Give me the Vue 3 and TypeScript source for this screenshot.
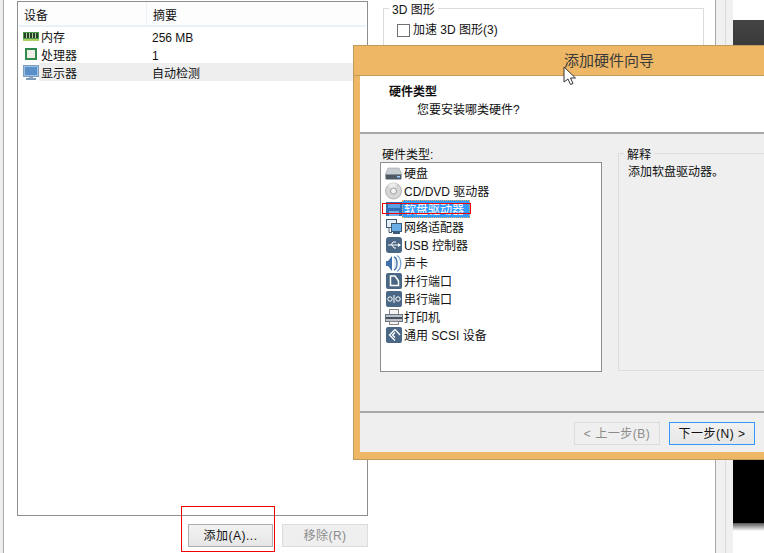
<script setup lang="ts">
interface Item { label: string; icon: string; selected?: boolean }
const devices = [
  { name: '内存', icon: 'ram', summary: '256 MB' },
  { name: '处理器', icon: 'cpu', summary: '1' },
  { name: '显示器', icon: 'monitor', summary: '自动检测', selected: true },
]
const items: Item[] = [
  { label: '硬盘', icon: 'hdd' },
  { label: 'CD/DVD 驱动器', icon: 'cd' },
  { label: '软盘驱动器', icon: 'floppy', selected: true },
  { label: '网络适配器', icon: 'net' },
  { label: 'USB 控制器', icon: 'usb' },
  { label: '声卡', icon: 'sound' },
  { label: '并行端口', icon: 'par' },
  { label: '串行端口', icon: 'ser' },
  { label: '打印机', icon: 'print' },
  { label: '通用 SCSI 设备', icon: 'scsi' },
]
</script>

<template>
  <div class="screen">
    <div class="edge"></div>

    <section class="left">
      <div class="table">
        <div class="thead">
          <span class="col-a">设备</span>
          <span class="col-b">摘要</span>
        </div>
        <div v-for="d in devices" :key="d.name" class="drow">
          <svg class="dicon" width="16" height="16" viewBox="0 0 16 16">
            <template v-if="d.icon === 'ram'">
              <rect x="0" y="3" width="16" height="9" fill="#4a9a4a" />
              <rect x="1" y="4" width="14" height="5" fill="#27402b" />
              <path d="M3.500 4v5M6.500 4v5M9.500 4v5M12.500 4v5" stroke="#b8d0a0" />
              <rect x="0" y="10" width="16" height="2" fill="#a9cf62" />
            </template>
            <template v-else-if="d.icon === 'cpu'">
              <rect x="2" y="1" width="12" height="12" fill="#2f8a4a" />
              <rect x="4" y="3" width="8" height="8" fill="#efefe9" />
            </template>
            <template v-else>
              <rect x="0.500" y="0.500" width="15" height="11" fill="#9cc0e4" stroke="#7d9cc0" />
              <rect x="2" y="2" width="12" height="8" fill="#5a8fc8" />
              <rect x="6" y="12" width="4" height="1" fill="#8fa9c4" />
              <rect x="3" y="13" width="10" height="2" fill="#7f9dbb" />
            </template>
          </svg>
          <div class="dcells" :class="{ sel: d.selected }">
            <span class="dname">{{ d.name }}</span>
            <span class="dsum">{{ d.summary }}</span>
          </div>
        </div>
      </div>
      <div class="actions">
        <button class="btn">添加(A)...</button>
        <button class="btn off wide">移除(R)</button>
      </div>
    </section>

    <section class="right">
      <div class="group3d">
        <span class="legend">3D 图形</span>
        <label class="check"><i class="box"></i>加速 3D 图形(3)</label>
      </div>
    </section>

    <div class="rails">
      <div class="rail"></div>
      <div class="rail2"></div>
    </div>

    <div class="dark">
      <div class="dark-top"></div>
      <div class="dark-main"></div>
      <div class="dark-fade"></div>
    </div>

    <div class="dialog">
      <div class="title">添加硬件向导</div>
      <div class="body">
        <div class="head">
          <div class="h1">硬件类型</div>
          <div class="h2">您要安装哪类硬件?</div>
        </div>
        <div class="main">
          <div class="col-list">
            <div class="list-label">硬件类型:</div>
            <div class="list">
              <div v-for="it in items" :key="it.label" class="li">
                <svg class="licon" width="18" height="18" viewBox="0 0 18 18">
                  <template v-if="it.icon === 'hdd'">
                    <path d="M3 4h11l3 7H0z" fill="#c9ced3" stroke="#9aa2aa" stroke-width=".6" />
                    <rect x="0.500" y="10.500" width="16" height="5" rx="1" fill="#4f5a66" />
                    <rect x="12" y="12" width="3" height="1.500" fill="#9fd0ff" />
                  </template>
                  <template v-else-if="it.icon === 'cd'">
                    <circle cx="8.500" cy="9" r="8" fill="#d6d6d6" stroke="#b4b4b4" />
                    <path d="M8.500 9L3 3.500A8 8 0 0 1 12 2z" fill="#ececec" />
                    <circle cx="8.500" cy="9" r="3" fill="#f5f5f5" stroke="#9c9c9c" />
                  </template>
                  <template v-else-if="it.icon === 'floppy'">
                    <rect x="1" y="2" width="16" height="14" fill="#2f6fb8" />
                    <rect x="3" y="3" width="12" height="5" fill="#5a9ee4" />
                    <rect x="4" y="11" width="10" height="5" fill="#76b0ec" />
                  </template>
                  <template v-else-if="it.icon === 'net'">
                    <rect x="1.500" y="1.500" width="10" height="8" fill="#e6eef6" stroke="#3d5a76" />
                    <path d="M4 9.500v5h3" stroke="#3d5a76" fill="none" />
                    <rect x="6.500" y="5.500" width="10" height="8" fill="#69ade6" stroke="#3d5a76" />
                    <rect x="8" y="14" width="7" height="2" fill="#3d5a76" />
                  </template>
                  <template v-else-if="it.icon === 'usb'">
                    <rect x="1" y="1" width="16" height="16" rx="3" fill="#4a6785" />
                    <path d="M3 9h11M6 9l2-3h3M7 9l2 3h2" stroke="#fff" fill="none" />
                    <path d="M13 7l3 2-3 2z" fill="#fff" />
                  </template>
                  <template v-else-if="it.icon === 'sound'">
                    <path d="M1 7h2l4-5v15l-4-5H1z" fill="#3f70a8" />
                    <path d="M9 3c4 1 4 12 0 13" stroke="#3f70a8" fill="#dbe7f3" stroke-width="1.300" />
                    <path d="M12 1.500c5 3 5 13 0 16" stroke="#7fa8d4" fill="none" stroke-width="1.400" />
                  </template>
                  <template v-else-if="it.icon === 'par'">
                    <rect x="1" y="1" width="16" height="16" rx="2" fill="#4a6785" />
                    <path d="M5.500 4v9.500h8V9L10 4z" stroke="#fff" fill="none" stroke-width="1.500" />
                  </template>
                  <template v-else-if="it.icon === 'ser'">
                    <rect x="1" y="1" width="16" height="16" rx="2" fill="#4a6785" />
                    <circle cx="5" cy="9" r="2.200" stroke="#fff" fill="none" />
                    <circle cx="13" cy="9" r="2.200" stroke="#fff" fill="none" />
                    <path d="M9 5v8" stroke="#fff" />
                  </template>
                  <template v-else-if="it.icon === 'print'">
                    <rect x="4.500" y="1.500" width="9" height="5" fill="#f4f4f4" stroke="#888" />
                    <rect x="0.500" y="6.500" width="17" height="7" fill="#bcc2c9" stroke="#6b7480" />
                    <rect x="1" y="9" width="16" height="2" fill="#47525e" />
                    <rect x="4.500" y="13.500" width="9" height="3" fill="#f4f4f4" stroke="#888" />
                  </template>
                  <template v-else>
                    <rect x="1" y="1" width="16" height="16" rx="2" fill="#4a6785" />
                    <path d="M10 3.500L4.500 9 10 14.500M10 6.500L7.500 9 10 11.500" stroke="#fff" fill="none" stroke-width="1.300" />
                    <path d="M10 3.500L15 9" stroke="#fff" fill="none" stroke-width="1.300" />
                  </template>
                </svg>
                <span class="ltext" :class="{ sel: it.selected }">{{ it.label }}</span>
              </div>
            </div>
          </div>
          <div class="explain">
            <span class="legend2">解释</span>
            <div class="explain-text">添加软盘驱动器。</div>
          </div>
        </div>
        <div class="foot">
          <button class="btn wide off">&lt; 上一步(B)</button>
          <button class="btn wide primary">下一步(N) &gt;</button>
        </div>
      </div>
    </div>

    <div class="mark mark-add"></div>
    <div class="mark mark-floppy"></div>
    <svg class="cursor" width="14" height="20" viewBox="0 0 14 20">
      <path d="M1 1v15l4-3 2.500 5.500 2.500-1L7.500 12H12.500z" fill="#fff" stroke="#333" />
    </svg>
  </div>
</template>

<style>
html, body { margin: 0; background: #fff; }
</style>

<style scoped>
.screen {
  position: relative;
  width: 764px;
  height: 553px;
  overflow: hidden;
  display: flex;
  background: #fff;
  color: #111;
  font: 12px/18px "Liberation Sans", "Noto Sans CJK SC", sans-serif;
}
.edge {
  width: 3px;
  flex: none;
  background: #eeeeee;
  border-right: 1px solid #a8a8a8;
}
.left {
  flex: none;
  width: 351px;
  margin-left: 13px;
  padding-top: 1px;
  display: flex;
  flex-direction: column;
}
.table {
  height: 515px;
  box-sizing: border-box;
  border: 1px solid #8e8e8e;
  background: #fff;
}
.thead {
  height: 23px;
  margin: 0 1px;
  display: flex;
  background: #fdfdfe;
  border-bottom: 2px solid #e9f2fb;
  line-height: 29px;
}
.col-a {
  width: 128px;
  flex: none;
  padding-left: 5px;
  box-sizing: border-box;
  border-right: 1px solid #e9f2fb;
}
.col-b { padding-left: 6px; }
.drow {
  display: flex;
  height: 18px;
  padding-left: 4px;
}
.dicon { flex: none; margin: 2px 0 0 1px; }
.dcells {
  flex: 1;
  display: flex;
  height: 18px;
  box-sizing: border-box;
  padding-top: 2px;
}
.dcells.sel { background: #eeeeee; }
.dname { width: 113px; flex: none; padding-left: 2px; box-sizing: border-box; }
.actions {
  display: flex;
  justify-content: flex-end;
  gap: 9px;
  margin-top: 8px;
}
.btn {
  width: 85px;
  height: 23px;
  padding: 0;
  box-sizing: border-box;
  border: 1px solid #adadad;
  background: linear-gradient(#f2f2f2, #e6e6e6);
  color: #111;
  font: inherit;
  letter-spacing: 0.5px;
}
.btn.off {
  border-color: #dcdcdc;
  background: #efefef;
  color: #8b8b8b;
}
.btn.primary {
  border-color: #3399ff;
}
.right {
  flex: none;
  width: 347px;
  box-sizing: border-box;
  padding: 8px 0 0 15px;
}
.group3d {
  position: relative;
  width: 321px;
  height: 60px;
  box-sizing: border-box;
  border: 1px solid #dcdcdc;
  padding: 12px 0 0 13px;
}
.legend {
  position: absolute;
  left: 5px;
  top: -8px;
  padding: 0 3px;
  background: #fff;
}
.check { display: flex; align-items: center; gap: 3px; }
.box {
  width: 13px;
  height: 13px;
  box-sizing: border-box;
  border: 1px solid #707070;
  background: #fff;
}
.rails {
  flex: none;
  display: flex;
  width: 18px;
  height: 553px;
}
.rail {
  width: 11px;
  box-sizing: border-box;
  background: #f0f0f0;
  border-left: 1px solid #a8a8a8;
  border-right: 1px solid #dcdcdc;
}
.rail2 { width: 7px; background: #f0f0f0; }
.dark {
  flex: 1;
  display: flex;
  flex-direction: column;
}
.dark-top { height: 20px; background: #fff; }
.dark-main {
  height: 503px;
  background: linear-gradient(#444 0, #2c2c2c 60px, #000 200px);
}
.dark-fade {
  height: 8px;
  background: linear-gradient(#555, #fff);
}
.dialog {
  position: absolute;
  left: 353px;
  top: 45px;
  width: 411px;
  height: 415px;
  box-sizing: border-box;
  background: #edb766;
  border: 1px solid #c49a5c;
  border-right: none;
  padding: 0 0 7px 6px;
  display: flex;
  flex-direction: column;
}
.title {
  height: 29px;
  flex: none;
  line-height: 29px;
  padding-left: 210px;
  font-size: 15px;
  color: #3a3a3a;
  border-bottom: 1px solid #c49a5c;
  margin-left: -6px;
}
.body {
  flex: 1;
  display: flex;
  flex-direction: column;
  background: #efefef;
  min-height: 0;
}
.head {
  height: 58px;
  flex: none;
  box-sizing: border-box;
  background: #fff;
  border-bottom: 2px solid #a9a9a9;
  padding: 7px 0 0 29px;
}
.h1 { font-weight: 700; }
.h2 { padding-left: 28px; }
.main {
  flex: 1;
  display: flex;
  padding: 13px 0 0 20px;
  gap: 16px;
  border-bottom: 2px solid #a9a9a9;
}
.col-list { width: 222px; flex: none; }
.list-label { padding-left: 2px; height: 15px; line-height: 16px; }
.list {
  width: 222px;
  height: 210px;
  box-sizing: border-box;
  border: 1px solid #8e8e8e;
  background: #fff;
  padding: 1px 0 0 4px;
}
.li { display: flex; height: 18px; }
.licon { flex: none; }
.ltext { padding: 0 1px; white-space: nowrap; height: 18px; line-height: 21px; }
.ltext.sel {
  margin-left: -1px;
  padding: 0 6px 0 2px;
  background: #3399ff;
  color: #fff;
  outline: 1px dotted #e8b060;
  outline-offset: -1px;
}
.explain {
  position: relative;
  flex: 1;
  height: 218px;
  margin-top: 6px;
  box-sizing: border-box;
  border: 1px solid #dcdcdc;
  border-right: none;
  padding: 9px 0 0 9px;
}
.legend2 {
  position: absolute;
  left: 5px;
  top: -8px;
  padding: 0 3px;
  background: #efefef;
}
.foot {
  flex: none;
  height: 39px;
  display: flex;
  justify-content: flex-end;
  align-items: flex-start;
  gap: 9px;
  padding: 9px 9px 0 0;
  box-sizing: border-box;
}
.wide { width: 86px; }
.mark {
  position: absolute;
  box-sizing: border-box;
  border: 1px solid #f00000;
}
.mark-add { left: 181px; top: 506px; width: 94px; height: 46px; }
.mark-floppy { left: 382px; top: 203px; width: 89px; height: 11px; }
.cursor { position: absolute; left: 563px; top: 66px; }
</style>
